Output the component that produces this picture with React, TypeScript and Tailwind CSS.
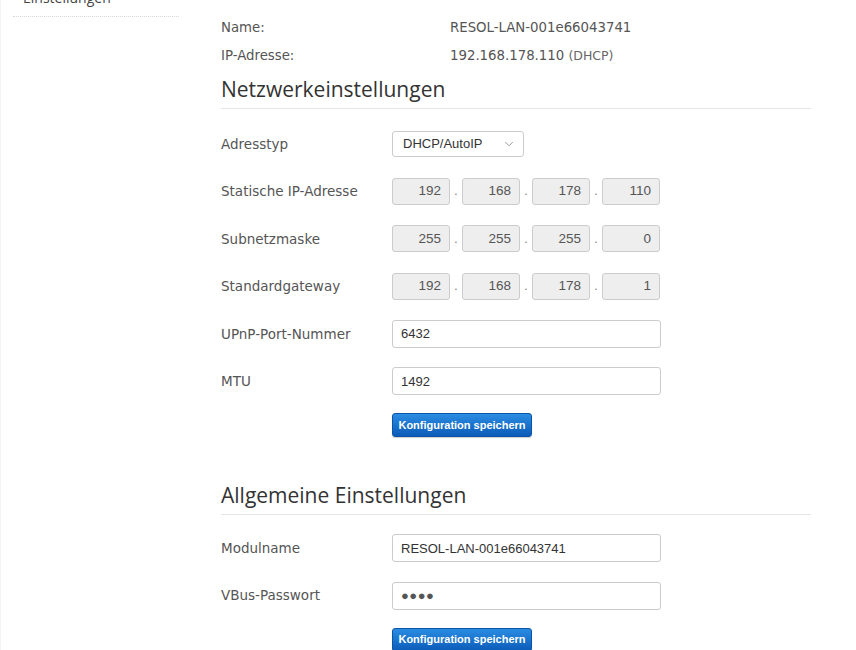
import { ChevronDown } from 'lucide-react'
import type { ReactNode } from 'react'

const labelCls = "w-[171px] shrink-0 text-[13.5px] text-[#555] font-['DejaVu_Sans',Verdana,sans-serif]"
const inputCls =
  "w-[269px] h-[28px] px-[8px] border border-[#ccc] rounded-[3px] bg-white text-[13px] text-[#333] font-['Liberation_Sans',Arial,sans-serif] outline-none"
const headingCls =
  "text-[21px] leading-[28px] text-[#333] font-['Open_Sans',sans-serif] pb-[5px] border-b border-[#e5e5e5]"

function Row({ label, children }: { label: string; children: ReactNode }) {
  return (
    <div className="flex h-[47.5px] items-center">
      <div className={labelCls}>{label}</div>
      {children}
    </div>
  )
}

function IpFields({ parts }: { parts: string[] }) {
  return (
    <div className="flex items-center font-['Liberation_Sans',Arial,sans-serif] text-[13.5px] text-[#555]">
      {parts.map((p, i) => (
        <div key={i} className="flex items-center">
          {i > 0 && <span className="w-[12px] text-center text-[#888]">.</span>}
          <div className="w-[58px] h-[27px] flex items-center justify-end pr-[8px] border border-[#ccc] rounded-[3px] bg-[#eee]">
            {p}
          </div>
        </div>
      ))}
    </div>
  )
}

function SaveButton() {
  return (
    <button className="h-[24px] w-[140px] rounded-[3px] border border-[#0b54a8] bg-linear-to-b from-[#2b8ce2] to-[#0a5bb8] text-[11px] font-bold text-white font-['Liberation_Sans',Arial,sans-serif] shadow-[0_1px_1px_rgba(0,0,0,0.2)]">
      Konfiguration speichern
    </button>
  )
}

export default function App() {
  return (
    <div className="flex w-[856px] h-[650px] overflow-hidden bg-white border-l border-[#f3f3f3]">
      <aside className="w-[178px] shrink-0 pl-[12px]">
        <div className="-mt-[14px] pl-[10px] pb-[6px] border-b border-dotted border-[#d8d8d8] text-[14px] leading-[24px] text-[#444] font-['Open_Sans',sans-serif]">
          Einstellungen
        </div>
      </aside>

      <main className="ml-[42px] w-[590px] pt-[14px]">
        <div className="text-[13.3px] text-[#555] font-['DejaVu_Sans',Verdana,sans-serif]">
          <div className="flex h-[28px] items-center">
            <div className="w-[229px]">Name:</div>
            <div>RESOL-LAN-001e66043741</div>
          </div>
          <div className="flex h-[28px] items-center">
            <div className="w-[229px]">IP-Adresse:</div>
            <div>
              192.168.178.110 <span className="text-[12.5px] text-[#666]">(DHCP)</span>
            </div>
          </div>
        </div>

        <h2 className={`mt-[5px] ${headingCls}`}>Netzwerkeinstellungen</h2>

        <div className="mt-[11px]">
          <Row label="Adresstyp">
            <div className="w-[132px] h-[26px] flex items-center justify-between pl-[10px] pr-[7px] border border-[#ccc] rounded-[3px] bg-white text-[13px] text-[#333] font-['Liberation_Sans',Arial,sans-serif]">
              DHCP/AutoIP
              <ChevronDown size={14} strokeWidth={1.3} className="text-[#777]" />
            </div>
          </Row>
          <Row label="Statische IP-Adresse">
            <IpFields parts={['192', '168', '178', '110']} />
          </Row>
          <Row label="Subnetzmaske">
            <IpFields parts={['255', '255', '255', '0']} />
          </Row>
          <Row label="Standardgateway">
            <IpFields parts={['192', '168', '178', '1']} />
          </Row>
          <Row label="UPnP-Port-Nummer">
            <input className={inputCls} defaultValue="6432" readOnly />
          </Row>
          <Row label="MTU">
            <input className={inputCls} defaultValue="1492" readOnly />
          </Row>
        </div>

        <div className="mt-[6px] pl-[171px]">
          <SaveButton />
        </div>

        <h2 className={`mt-[44px] ${headingCls}`}>Allgemeine Einstellungen</h2>

        <div className="mt-[9px]">
          <Row label="Modulname">
            <input className={inputCls} defaultValue="RESOL-LAN-001e66043741" readOnly />
          </Row>
          <Row label="VBus-Passwort">
            <input
              className={`${inputCls} text-[12px] tracking-[0.5px] text-[#555]`}
              defaultValue="●●●●"
              readOnly
            />
          </Row>
        </div>

        <div className="mt-[6px] pl-[171px]">
          <SaveButton />
        </div>
      </main>
    </div>
  )
}
